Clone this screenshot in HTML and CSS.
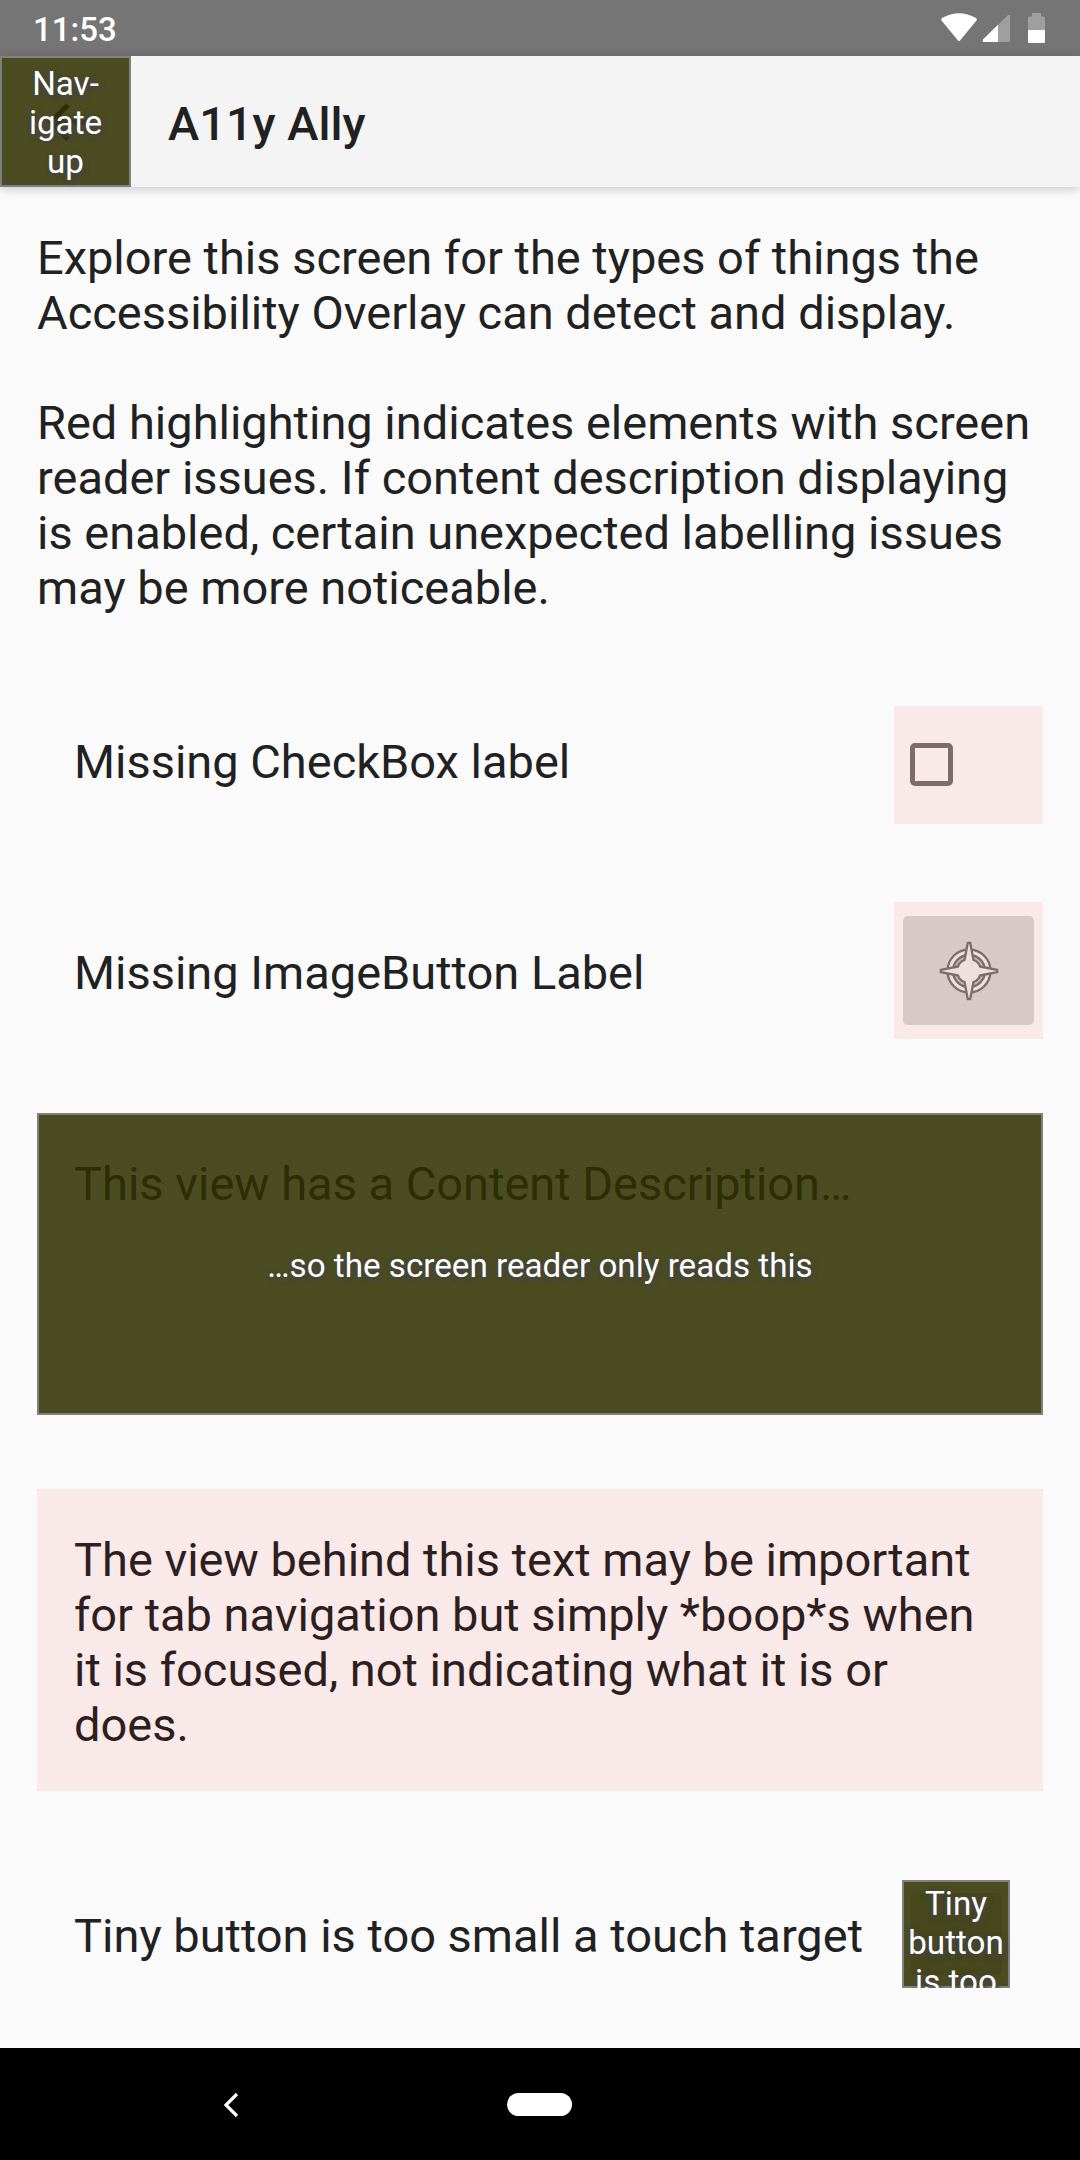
FILE: index.html
```html
<!DOCTYPE html>
<html lang="en">
<head>
<meta charset="utf-8">
<title>A11y Ally</title>
<link rel="stylesheet" href="styles.css">
</head>
<body>
<div class="screen">
  <header class="status">
    <span class="clock">11:53</span>
    <svg class="status-icons" width="110" height="56" viewBox="0 0 110 56">
      <path d="M1.500 20.500Q0.500 19 2 18Q19 8.500 36 18Q37.500 19 36.500 20.500L20 40.500Q19 41.500 18 40.500Z" fill="#fff"/>
      <path d="M43.500 42Q42 41.500 43 39.500L67.500 15.500Q70 14 70 16V40.500Q70 42 68.500 42Z" fill="#9f9f9f"/>
      <path d="M43.500 42Q42 41.500 43 39.500L58 24.800V42Z" fill="#fff"/>
      <path d="M88 18Q88 16.500 89.500 16.500H92V13H101V16.500H103.500Q105 16.500 105 18V30H88Z" fill="#9f9f9f"/>
      <path d="M88 30H105V41.500Q105 43 103.500 43H89.500Q88 43 88 41.500Z" fill="#fff"/>
    </svg>
  </header>
  <div class="toolbar">
    <div class="described nav-up">
      <svg class="arrow" width="46" height="46" viewBox="0 0 46 46"><path d="M39 23H7M22 6L5 23L22 40" fill="none" stroke="#2e2e05" stroke-width="5"/></svg>
      <span class="caption">Nav-<br>igate<br>up</span>
    </div>
    <h1 class="title">A11y Ally</h1>
  </div>
  <main class="content">
    <p class="intro">Explore this screen for the types of things the<br>Accessibility Overlay can detect and display.<br><br>Red highlighting indicates elements with screen<br>reader issues. If content description displaying<br>is enabled, certain unexpected labelling issues<br>may be more noticeable.</p>
    <div class="row row-check">
      <span class="label">Missing CheckBox label</span>
      <div class="issue check"><span class="box"></span></div>
    </div>
    <div class="row row-image">
      <span class="label">Missing ImageButton Label</span>
      <div class="issue image">
        <div class="image-button">
          <svg width="60" height="60" viewBox="-30 -30 60 60" stroke="#7e6c6c" stroke-width="2.300" stroke-linejoin="round">
            <circle r="21.500" fill="#eedfdf"/>
            <circle r="16" fill="#c9b9b9"/>
            <path d="M-1.200 -28.200H1.200L4.500 -11L7 -10L10 -7L11 -4.500L28.200 -1.200V1.200L11 4.500L10 7L7 10L4.500 11L1.200 28.200H-1.200L-4.500 11L-7 10L-10 7L-11 4.500L-28.200 1.200V-1.200L-11 -4.500L-10 -7L-7 -10L-4.500 -11Z" fill="#eedfdf"/>
          </svg>
        </div>
      </div>
    </div>
    <div class="described block">
      <p class="under">This view has a Content Description…</p>
      <span class="caption">…so the screen reader only reads this</span>
    </div>
    <p class="issue boop">The view behind this text may be important<br>for tab navigation but simply *boop*s when<br>it is focused, not indicating what it is or<br>does.</p>
    <div class="row row-tiny">
      <span class="label">Tiny button is too small a touch target</span>
      <div class="described tiny"><span class="caption">Tiny<br>button<br>is too</span></div>
    </div>
  </main>
  <nav class="navbar">
    <svg class="back" width="20" height="28" viewBox="0 0 20 28"><path d="M15 3L4 14L15 25" fill="none" stroke="#fff" stroke-width="3.200"/></svg>
    <span class="home"></span>
  </nav>
</div>
</body>
</html>
```
FILE: styles.css
```css
* { box-sizing: border-box; }
body { margin: 0; font-family: Roboto, "Liberation Sans", sans-serif; color: #212121; background: #fafafa; }
p, h1 { margin: 0; }
svg { display: block; }
.screen { width: 1080px; height: 2160px; display: flex; flex-direction: column; overflow: hidden; background: #fafafa; }
.status { height: 56px; flex: none; background: #757575; color: #fff; display: flex; justify-content: space-between; padding: 0 30px 0 33px; }
.clock { font-size: 33px; font-weight: 500; line-height: 59px; }
.toolbar { height: 131px; flex: none; background: #f4f4f4; display: flex; align-items: center; gap: 37px; box-shadow: 0 2px 10px rgba(0,0,0,.2); position: relative; }
.title { font-size: 47px; font-weight: 500; line-height: 56px; padding-top: 5px; }
.described { position: relative; background: #4c4c22; box-shadow: inset 0 0 0 2px #808080; display: flex; align-items: center; justify-content: center; }
.caption { position: relative; color: #fff; font-size: 33.2px; line-height: 39px; padding-top: 2px; text-align: center; white-space: nowrap; text-shadow: 2px 2px 5px #444, 2px 2px 5px #444; }
.nav-up { width: 131px; height: 131px; }
.arrow { position: absolute; left: 46px; top: 43px; }
.content { flex: 1; padding: 43px 37px 0; font-size: 46.97px; line-height: 55px; display: flex; flex-direction: column; }
.intro, .label, .under, .boop { white-space: nowrap; }
.row { display: flex; align-items: center; justify-content: space-between; padding-left: 37px; }
.issue { background: #f9e9e9; }
.row-check { margin-top: 91px; height: 118px; }
.row-check .label { padding-bottom: 7px; }
.check { width: 149px; height: 118px; padding: 37px 16px; }
.box { display: block; width: 43px; height: 43px; border: 5px solid #7e6c6c; border-radius: 5px; }
.row-image { margin-top: 78px; height: 137px; }
.row-image .label { padding-top: 4px; }
.image { width: 149px; height: 137px; padding: 14px 9px; }
.image-button { width: 131px; height: 109px; border-radius: 5px; background: #d8c9c9; display: flex; align-items: center; justify-content: center; }
.block { margin-top: 74px; height: 302px; }
.under { position: absolute; left: 37px; top: 43px; color: #2e2e05; }
.boop { margin-top: 74px; height: 302px; padding: 43px 37px; color: #2e1e1e; }
.row-tiny { margin-top: 89px; height: 108px; padding-right: 33px; }
.row-tiny .label { padding-top: 3px; }
.tiny { width: 108px; height: 108px; align-items: flex-start; overflow: hidden; padding-top: 2px; }
.tiny::before { content: ""; position: absolute; left: 9px; top: 13px; width: 91px; height: 82px; border-radius: 5px; background: #47471d; }
.navbar { height: 112px; flex: none; background: #000; display: flex; align-items: center; padding: 1px 0 0 222px; gap: 265px; }
.home { width: 65px; height: 23px; border-radius: 12px; background: #fff; }
```
